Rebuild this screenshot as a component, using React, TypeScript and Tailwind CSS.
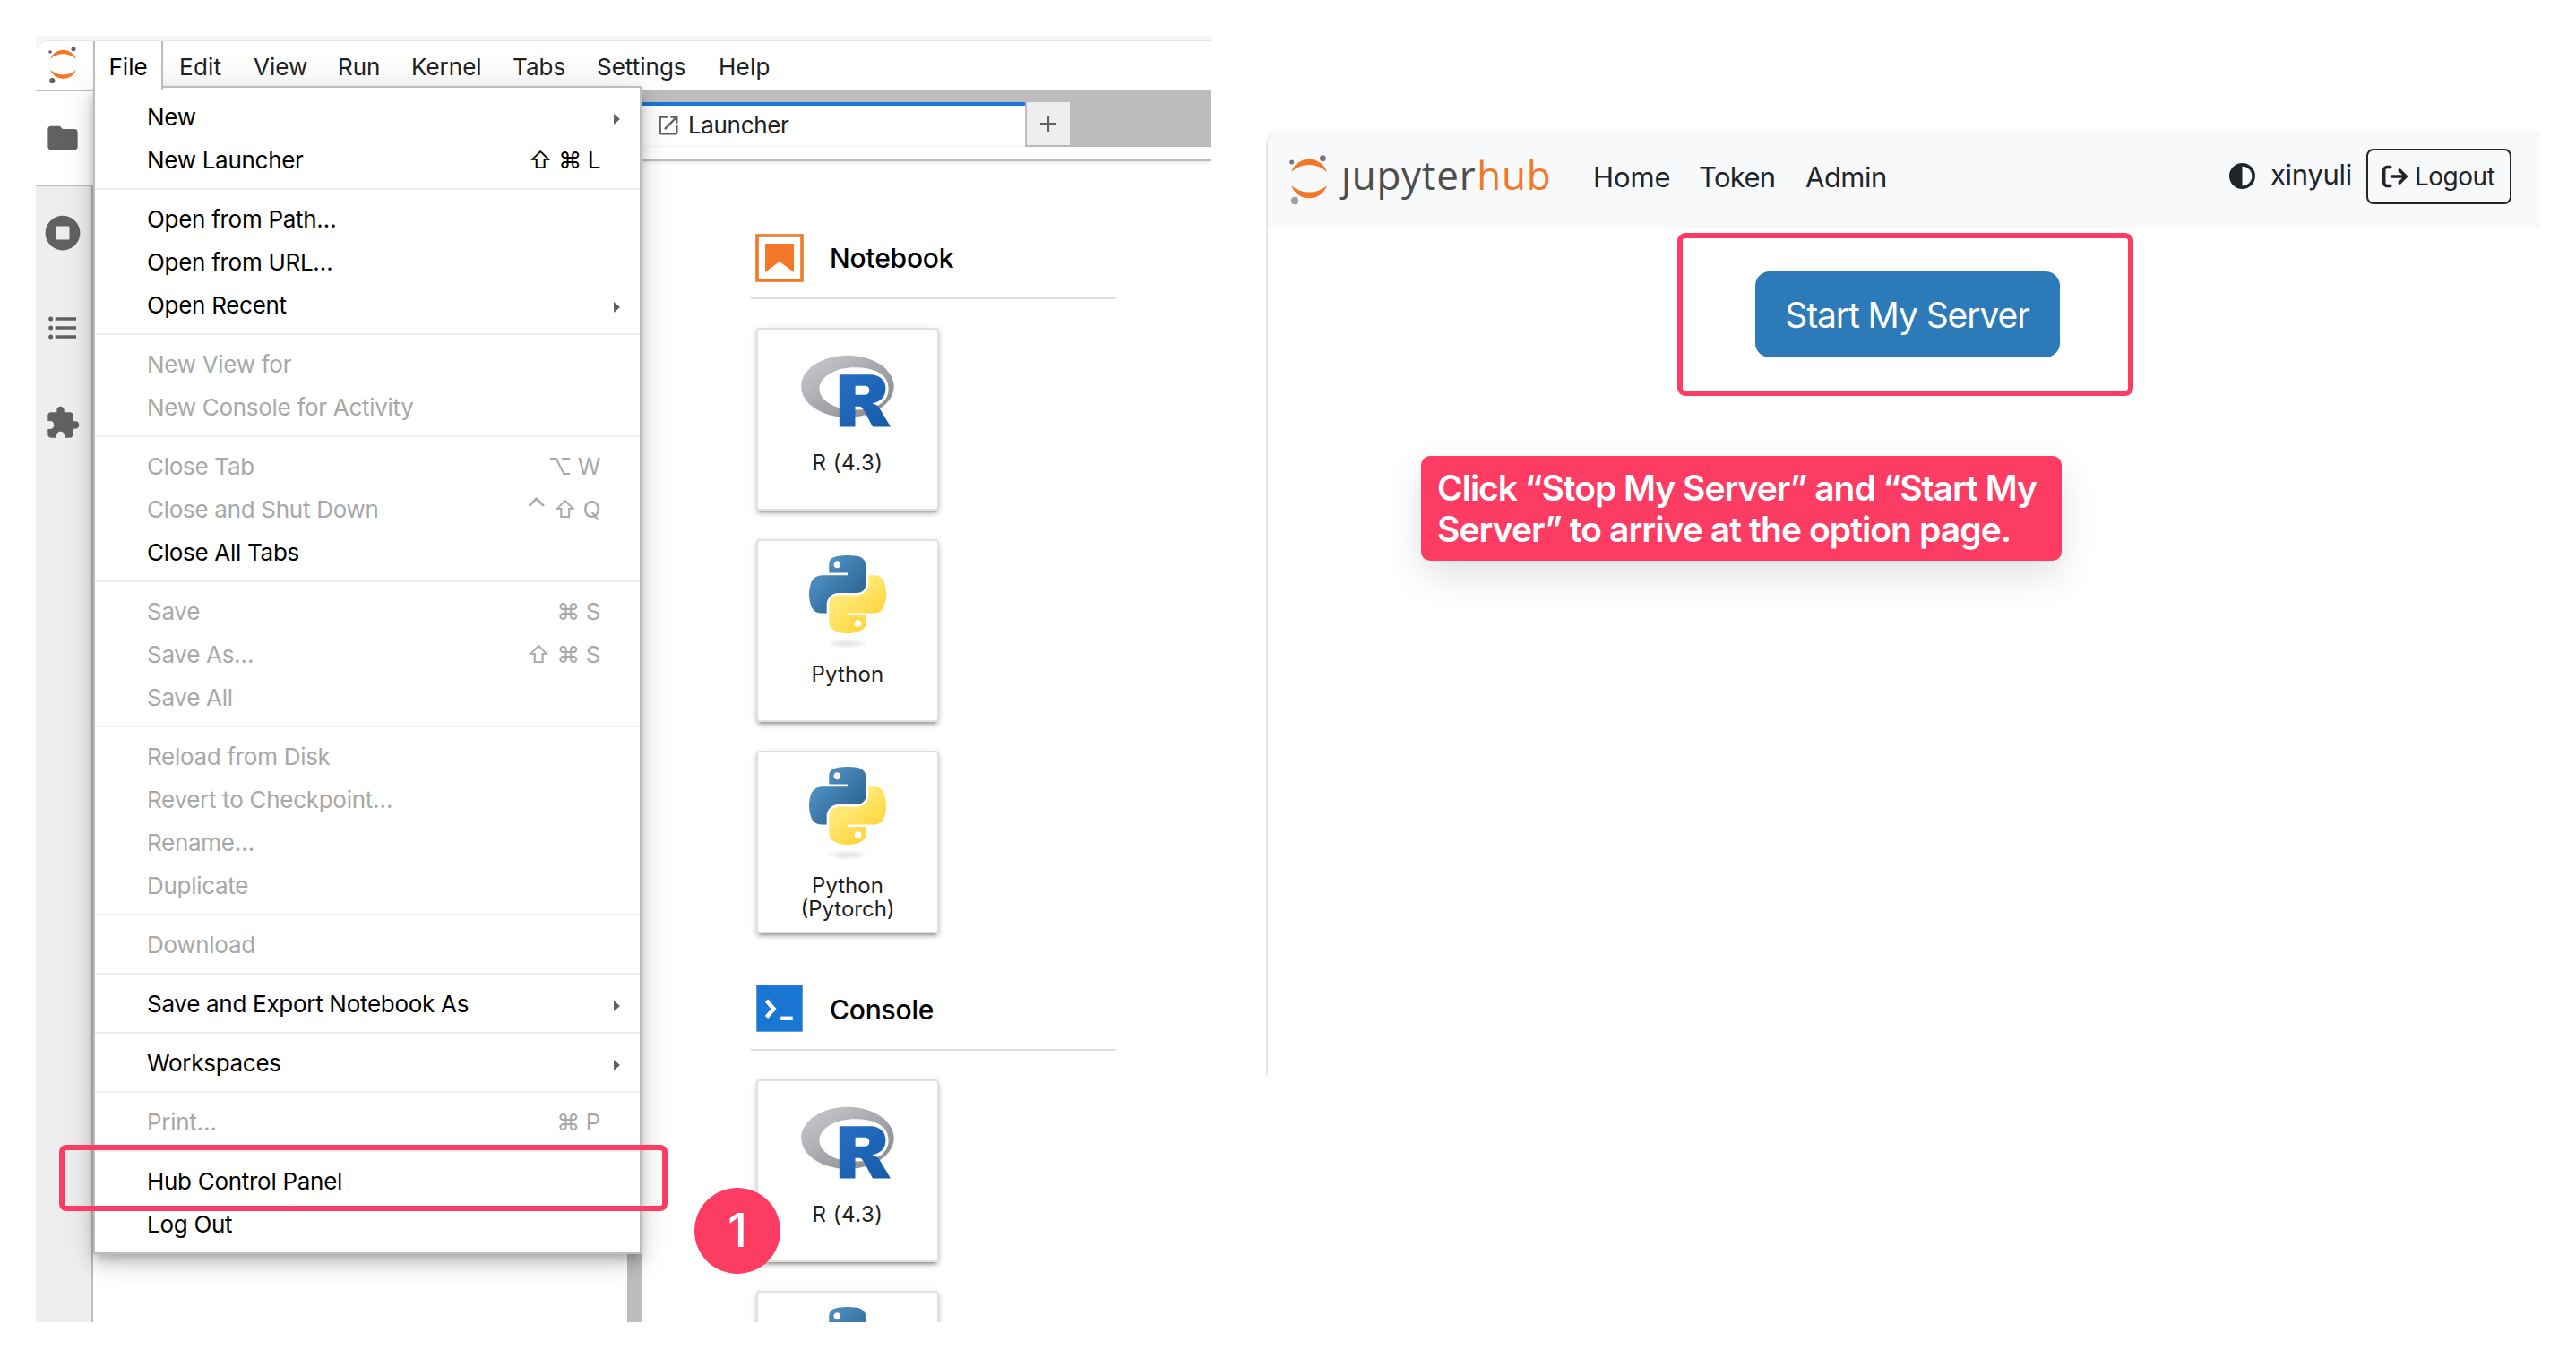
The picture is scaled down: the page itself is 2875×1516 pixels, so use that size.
import type { ReactNode } from "react";
import { FaArrowRightFromBracket, FaCircleHalfStroke } from "react-icons/fa6";

type MenuEntry = {
  label: string;
  keys?: string[];
  submenu?: boolean;
  enabled?: boolean;
};

const fileMenu: MenuEntry[][] = [
  [
    { label: "New", submenu: true, enabled: true },
    { label: "New Launcher", keys: ["⇧", "⌘", "L"], enabled: true },
  ],
  [
    { label: "Open from Path…", enabled: true },
    { label: "Open from URL…", enabled: true },
    { label: "Open Recent", submenu: true, enabled: true },
  ],
  [{ label: "New View for" }, { label: "New Console for Activity" }],
  [
    { label: "Close Tab", keys: ["⌥", "W"] },
    { label: "Close and Shut Down", keys: ["⌃", "⇧", "Q"] },
    { label: "Close All Tabs", enabled: true },
  ],
  [
    { label: "Save", keys: ["⌘", "S"] },
    { label: "Save As…", keys: ["⇧", "⌘", "S"] },
    { label: "Save All" },
  ],
  [
    { label: "Reload from Disk" },
    { label: "Revert to Checkpoint…" },
    { label: "Rename…" },
    { label: "Duplicate" },
  ],
  [{ label: "Download" }],
  [{ label: "Save and Export Notebook As", submenu: true, enabled: true }],
  [{ label: "Workspaces", submenu: true, enabled: true }],
  [{ label: "Print…", keys: ["⌘", "P"] }],
  [
    { label: "Hub Control Panel", enabled: true },
    { label: "Log Out", enabled: true },
  ],
];

function LabLogo() {
  return (
    <svg className="h-[54px] w-16 shrink-0" viewBox="40 46 64 54">
      <g fill="#f37726">
        <path d="M56 66A15.35 15.35 0 0 1 85 66A21.3 21.3 0 0 0 56 66Z" />
        <path d="M56 77.7A15.35 15.35 0 0 0 85 77.7A21.3 21.3 0 0 1 56 77.7Z" />
      </g>
      <g fill="#616161">
        <circle cx="82" cy="54.7" r="2.5" />
        <circle cx="56" cy="58" r="1.8" />
        <circle cx="58.3" cy="90" r="3.1" />
      </g>
    </svg>
  );
}

function HubLogo() {
  return (
    <svg className="h-16 w-[46px] shrink-0" viewBox="1438 165 46 64">
      <g fill="#f37726">
        <path d="M1441.3 191.7A21.07 21.07 0 0 1 1481 191.7A29.4 29.4 0 0 0 1441.3 191.7Z" />
        <path d="M1441.3 207.3A21.07 21.07 0 0 0 1481 207.3A31 31 0 0 1 1441.3 207.3Z" />
      </g>
      <circle cx="1476.4" cy="176.7" r="3.4" fill="#767677" />
      <circle cx="1441.7" cy="181" r="2.5" fill="#767677" />
      <circle cx="1445" cy="224" r="4.2" fill="#9e9e9e" />
    </svg>
  );
}

function RLogo() {
  return (
    <svg className="h-[81px] w-[104px]" viewBox="0 0 724 561">
      <defs>
        <linearGradient id="rRing" x1="0" y1="0" x2="1" y2="1">
          <stop offset="0" stopColor="#cbced0" />
          <stop offset="1" stopColor="#84838b" />
        </linearGradient>
        <linearGradient id="rBody" x1="0" y1="0" x2="1" y2="1">
          <stop offset="0" stopColor="#276dc3" />
          <stop offset="1" stopColor="#165caa" />
        </linearGradient>
      </defs>
      <path
        fill="url(#rRing)"
        fillRule="evenodd"
        d="M361.453 485.937C162.329 485.937.906 377.828.906 244.469.906 111.109 162.329 3 361.453 3 560.578 3 722 111.109 722 244.469c0 133.359-161.422 241.468-360.547 241.468ZM416.641 97.406c-151.352 0-274.047 73.908-274.047 165.078s122.695 165.078 274.047 165.078 263.046-50.529 263.046-165.078c0-114.513-111.694-165.078-263.046-165.078Z"
      />
      <path
        fill="url(#rBody)"
        fillRule="evenodd"
        d="M550 377s21.822 6.585 34.5 13c4.399 2.226 12.01 6.668 17.5 12.5 5.378 5.712 8 11.5 8 11.5l86 145-139 .062L492 437s-13.31-22.869-21.5-29.5c-6.832-5.531-9.745-7.5-16.5-7.5h-33.026L421 558.974l-123 .052V152.938h247s112.5 2.029 112.5 109.062S550 377 550 377Zm-53.5-135.976-74.463-.048-.037 69.05 74.5-.024s34.5-.107 34.5-35.125c0-35.722-34.5-33.853-34.5-33.853Z"
      />
    </svg>
  );
}

function PythonLogo() {
  return (
    <svg className="h-[104px] w-[104px]" viewBox="0 0 104 104">
      <defs>
        <linearGradient id="pyBlue" x1="0" y1="0" x2="0.75" y2="0.75">
          <stop offset="0" stopColor="#5a9fd4" />
          <stop offset="1" stopColor="#306998" />
        </linearGradient>
        <linearGradient id="pyYellow" x1="0.75" y1="0.85" x2="0.35" y2="0.35">
          <stop offset="0" stopColor="#ffd43b" />
          <stop offset="1" stopColor="#ffe873" />
        </linearGradient>
        <radialGradient id="pyShadow">
          <stop offset="0" stopColor="#b8b8b8" stopOpacity="0.35" />
          <stop offset="1" stopColor="#7f7f7f" stopOpacity="0" />
        </radialGradient>
      </defs>
      <g transform="translate(9 0) scale(0.775)">
        <path
          fill="url(#pyBlue)"
          d="M54.919 0C50.335.022 45.958.413 42.106 1.095 30.76 3.099 28.7 7.295 28.7 15.032v10.219h26.813v3.406H18.638c-7.793 0-14.616 4.684-16.75 13.594-2.462 10.213-2.571 16.586 0 27.25 1.906 7.938 6.457 13.594 14.25 13.594h9.218v-12.25c0-8.85 7.657-16.657 16.75-16.657h26.782c7.454 0 13.406-6.138 13.406-13.625V15.032c0-7.266-6.13-12.725-13.407-13.937C64.282.328 59.502-.02 54.92 0Zm-14.5 8.22c2.769 0 5.03 2.298 5.03 5.124 0 2.817-2.261 5.094-5.03 5.094-2.78 0-5.032-2.277-5.032-5.094 0-2.826 2.252-5.125 5.032-5.125Z"
        />
        <path
          fill="url(#pyYellow)"
          d="M85.638 28.657v11.906c0 9.231-7.826 17-16.75 17H42.106c-7.336 0-13.406 6.279-13.406 13.625V96.72c0 7.266 6.318 11.54 13.406 13.625 8.488 2.496 16.626 2.947 26.782 0 6.75-1.954 13.406-5.888 13.406-13.625V86.5H55.513v-3.406h40.187c7.792 0 10.696-5.435 13.406-13.594 2.8-8.399 2.68-16.476 0-27.25-1.926-7.757-5.604-13.594-13.406-13.594H85.638Zm-15.063 64.656c2.78 0 5.031 2.278 5.031 5.094 0 2.826-2.251 5.125-5.03 5.125-2.77 0-5.032-2.299-5.032-5.125 0-2.816 2.262-5.094 5.031-5.094Z"
        />
      </g>
      <ellipse cx="52" cy="98.5" rx="23" ry="5.5" fill="url(#pyShadow)" />
    </svg>
  );
}

function NotebookIcon() {
  return (
    <svg className="h-[54px] w-[54px]" viewBox="0 0 54 54">
      <rect x="2" y="2" width="50" height="50" fill="none" stroke="#f37726" strokeWidth="3.6" />
      <path fill="#f37726" d="M11 11H43V43L27 31L11 43Z" />
    </svg>
  );
}

function ConsoleIcon() {
  return (
    <svg className="h-[54px] w-[54px]" viewBox="0 0 54 54">
      <rect x="1.3" width="51.4" height="51.7" fill="#1976d2" />
      <path d="M12.5 17L20.5 26.2L12.5 35.5" fill="none" stroke="#fff" strokeWidth="4.6" />
      <rect x="28.3" y="34.6" width="13.4" height="4.4" fill="#fff" />
    </svg>
  );
}

function SideIcon({ path, box = "0 0 24 24" }: { path: string; box?: string }) {
  return (
    <div className="flex h-[106px] items-center pb-[2px] pl-[10px]">
      <svg className="h-10 w-10" viewBox={box} fill="#616161">
        <path d={path} />
      </svg>
    </div>
  );
}

function MenuRow({ label, keys, submenu, enabled }: MenuEntry) {
  return (
    <li
      className={
        "flex h-12 items-center pl-[58px] pr-[22px] " + (enabled ? "text-black" : "text-[#a8a8a8]")
      }
    >
      <span className="flex-1 whitespace-nowrap pt-[2px] tracking-[-0.29px]">{label}</span>
      {keys && (
        <span className="mr-[22px] whitespace-nowrap pt-[2px] tracking-[-0.4px]">
          {keys.map((key, i) => (
            <span key={key}>
              {i > 0 && " "}
              <span className={key === "⌃" ? "text-[31px] leading-none" : ""}>{key}</span>
            </span>
          ))}
        </span>
      )}
      {submenu && (
        <svg className="mt-[5px] h-3 w-[7px]" viewBox="0 0 7 12">
          <path d="M0 0L7 6L0 12Z" fill="#616161" />
        </svg>
      )}
    </li>
  );
}

function FileMenu() {
  return (
    <>
      <ul className="absolute left-16 top-14 z-10 h-[1304px] w-[612px] border-2 border-[#bdbdbd] bg-white py-2 text-[26px] leading-[46px] shadow-[0_6px_10px_-2px_rgba(0,0,0,0.2),0_12px_20px_rgba(0,0,0,0.14),0_2px_36px_rgba(0,0,0,0.12)]">
        {fileMenu.map((group, i) => (
          <li key={i}>
            {i > 0 && <div className="my-2 h-0.5 bg-[#eeeeee]" />}
            <ul>
              {group.map((entry) => (
                <MenuRow key={entry.label} {...entry} />
              ))}
            </ul>
          </li>
        ))}
      </ul>
      <div className="absolute left-16 top-1.5 z-20 h-[54px] w-[78px] border-x-2 border-[#bdbdbd] bg-white pl-[15.5px] pt-[3px] text-[26px] leading-[51px] text-black">
        File
      </div>
    </>
  );
}

function MenuBar() {
  return (
    <div className="flex h-[56px] border-b-2 border-[#bdbdbd] bg-white text-[26px] text-[#212121]">
      <LabLogo />
      <div className="flex pl-[78px] pt-[3px] leading-[51px]">
        <span className="w-[84px] pl-[18px] tracking-[0.25px]">Edit</span>
        <span className="w-[92px] pl-[17px]">View</span>
        <span className="w-[83px] pl-[19px]">Run</span>
        <span className="w-[114px] pl-[18px]">Kernel</span>
        <span className="w-[93px] pl-[17px]">Tabs</span>
        <span className="w-[135px] pl-[18px]">Settings</span>
        <span className="pl-[19px] tracking-[0.25px]">Help</span>
      </div>
    </div>
  );
}

function SideBar() {
  return (
    <div className="flex w-16 shrink-0 flex-col">
      <div className="h-[106px] border-b-2 border-[#bdbdbd] bg-white">
        <SideIcon path="M10 4H4c-1.1 0-1.99.9-1.99 2L2 18c0 1.1.9 2 2 2h16c1.1 0 2-.9 2-2V8c0-1.1-.9-2-2-2h-8l-2-2z" />
      </div>
      <div className="flex-1 border-r-2 border-[#bdbdbd] bg-[#eeeeee]">
        <SideIcon
          box="0 0 512 512"
          path="M256 8C119 8 8 119 8 256s111 248 248 248 248-111 248-248S393 8 256 8zm96 328c0 8.8-7.2 16-16 16H176c-8.8 0-16-7.2-16-16V176c0-8.8 7.2-16 16-16h160c8.8 0 16 7.2 16 16v160z"
        />
        <SideIcon path="M7 5h14v2H7V5m0 8v-2h14v2H7M4 4.5A1.5 1.5 0 0 1 5.5 6 1.5 1.5 0 0 1 4 7.5 1.5 1.5 0 0 1 2.5 6 1.5 1.5 0 0 1 4 4.5m0 6A1.5 1.5 0 0 1 5.5 12 1.5 1.5 0 0 1 4 13.5 1.5 1.5 0 0 1 2.5 12 1.5 1.5 0 0 1 4 10.5M7 19v-2h14v2H7m-3-2.5A1.5 1.5 0 0 1 5.5 18 1.5 1.5 0 0 1 4 19.5 1.5 1.5 0 0 1 2.5 18 1.5 1.5 0 0 1 4 16.5" />
        <SideIcon path="M20.5 11H19V7c0-1.1-.9-2-2-2h-4V3.5C13 2.12 11.88 1 10.5 1S8 2.12 8 3.5V5H4c-1.1 0-1.99.9-1.99 2v3.8H3.5c1.49 0 2.7 1.21 2.7 2.7s-1.21 2.7-2.7 2.7H2V20c0 1.1.9 2 2 2h3.8v-1.5c0-1.49 1.21-2.7 2.7-2.7 1.49 0 2.7 1.21 2.7 2.7V22H17c1.1 0 2-.9 2-2v-4h1.5c1.38 0 2.5-1.12 2.5-2.5S21.88 11 20.5 11z" />
      </div>
    </div>
  );
}

function KernelCard({ logo, children }: { logo: ReactNode; children: ReactNode }) {
  return (
    <div className="ml-1.5 flex h-[204px] w-[204px] shrink-0 flex-col items-center rounded-[4px] border-2 border-[#e0e0e0] bg-white pt-4 shadow-[0_6px_2px_-4px_rgba(0,0,0,0.2),0_4px_4px_rgba(0,0,0,0.14),0_2px_10px_rgba(0,0,0,0.12)]">
      <div className="flex h-[104px] shrink-0 items-center">{logo}</div>
      <div className="mt-4 text-center text-2xl leading-[26px] text-[#212121]">{children}</div>
    </div>
  );
}

function Section({
  icon,
  title,
  children,
}: {
  icon: ReactNode;
  title: string;
  children: ReactNode;
}) {
  return (
    <section>
      <div className="flex w-[408px] items-center border-b-2 border-[#e0e0e0] pb-[17px] pl-[5px]">
        {icon}
        <h2 className="ml-[29px] text-[30px] font-medium leading-[54px] tracking-[-0.2px] text-black">
          {title}
        </h2>
      </div>
      <div className="mt-8 flex flex-col gap-8">{children}</div>
    </section>
  );
}

function Launcher() {
  return (
    <div className="flex flex-1 flex-col">
      <div className="-mt-[2px] flex h-16 bg-[#bdbdbd] pt-[14px]">
        <div className="flex h-[50px] w-[428px] items-center border-t-4 border-[#1976d2] bg-white pl-4">
          <svg className="mb-[2px] h-7 w-7" viewBox="0 0 24 24" fill="#616161">
            <path d="M19 19H5V5h7V3H5a2 2 0 0 0-2 2v14a2 2 0 0 0 2 2h14c1.1 0 2-.9 2-2v-7h-2v7zM14 3v2h3.59l-9.83 9.83 1.41 1.41L19 6.41V10h2V3h-7z" />
          </svg>
          <span className="mb-[2px] ml-[8px] text-[26px] leading-[42px] tracking-[-0.35px] text-[#212121]">
            Launcher
          </span>
        </div>
        <div className="ml-0.5 flex h-12 w-12 items-center justify-center bg-[#eeeeee]">
          <svg className="h-[18px] w-[18px]" viewBox="0 0 18 18">
            <path d="M9 0V18M0 9H18" stroke="#616161" strokeWidth="2.2" />
          </svg>
        </div>
      </div>
      <div className="z-[1] h-4 shrink-0 border-b-2 border-[#bdbdbd] bg-white shadow-[0_1px_4px_rgba(0,0,0,0.12)]" />
      <div className="flex flex-col gap-[58px] pl-[122px] pt-[81px]">
        <Section icon={<NotebookIcon />} title="Notebook">
          <KernelCard logo={<RLogo />}>
            <span className="tracking-[0.5px]">R (4.3)</span>
          </KernelCard>
          <KernelCard logo={<PythonLogo />}>
            <span className="tracking-[0.2px]">Python</span>
          </KernelCard>
          <KernelCard logo={<PythonLogo />}>
            Python
            <br />
            (Pytorch)
          </KernelCard>
        </Section>
        <Section icon={<ConsoleIcon />} title="Console">
          <KernelCard logo={<RLogo />}>
            <span className="tracking-[0.5px]">R (4.3)</span>
          </KernelCard>
          <KernelCard logo={<PythonLogo />}>{null}</KernelCard>
        </Section>
      </div>
    </div>
  );
}

function LabWindow() {
  return (
    <div className="relative ml-10 mt-10 h-[1436px] w-[1312px] shrink-0">
      <div className="flex h-full w-full flex-col overflow-hidden bg-[#f6f6f6] pt-[5px]">
        <div className="h-[1431px] rounded-tl-[14px] border-t border-[#e8e8e8] bg-white">
          <div className="isolate h-full overflow-hidden rounded-tl-[14px]">
            <MenuBar />
            <div className="flex h-[1374px]">
              <SideBar />
              <div className="w-[596px] shrink-0" />
              <div className="w-4 shrink-0 bg-[#bdbdbd]" />
              <Launcher />
            </div>
          </div>
        </div>
      </div>
      <FileMenu />
      <div className="absolute left-[26px] top-[1238px] z-20 h-[74px] w-[679px] rounded-lg border-[6px] border-[#fc3c63]" />
      <div className="absolute left-[735px] top-[1286px] z-20 flex h-24 w-24 items-center justify-center rounded-full bg-[#fc3c63] text-[52px] font-medium text-white">
        1
      </div>
    </div>
  );
}

function HubWindow() {
  return (
    <div className="ml-[61px] mt-[146px] h-[1054px] w-[1422px] shrink-0 rounded-tl-[16px] border-l-2 border-[#e6e6e6]">
      <nav className="flex h-[109px] items-center rounded-tl-[14px] bg-[#f8f9fb] pb-[7px] pl-[23px] text-[31px] text-[#212529]">
        <HubLogo />
        <span className="ml-[13px] w-[281px] pb-[5px] font-['Open_Sans'] text-[44px] font-medium leading-[60px] tracking-[0.7px] text-[#4e4e4e]">
          ȷupyter<span className="ml-px text-[#f37726]">hub</span>
        </span>
        <span className="w-[118px] pt-[3px] tracking-[-0.1px]">Home</span>
        <span className="w-[119px] pt-[3px] tracking-[-0.7px]">Token</span>
        <span className="flex-1 pt-[3px] tracking-[-0.5px]">Admin</span>
        <FaCircleHalfStroke className="mb-[2px] mr-[17px] size-[29px]" />
        <span className="w-[107px] pb-[4px] tracking-[-0.3px]">xinyuli</span>
        <button className="mr-8 flex h-[62px] w-[162px] items-center rounded-lg border-2 border-[#212529] pl-4 text-[28px] tracking-[-0.5px]">
          <FaArrowRightFromBracket className="mr-[8px] size-[28px]" />
          Logout
        </button>
      </nav>
      <main>
        <div className="ml-[457px] mt-[5px] flex h-[182px] w-[509px] items-center justify-center rounded-[9px] border-[6px] border-[#fc3c63] pl-[4px]">
          <button className="h-24 w-[340px] rounded-2xl bg-[#2c7ab7] pt-[2px] text-[39px] leading-[94px] tracking-[-1.08px] text-white">
            Start My Server
          </button>
        </div>
        <p className="ml-[171px] mt-[67px] h-[117px] w-[715px] whitespace-nowrap rounded-[10px] bg-[#fc3c63] pl-[18px] pt-[13px] text-[39px] font-semibold leading-[46px] tracking-[-1.02px] text-white shadow-[0_16px_40px_rgba(0,0,0,0.12)]">
          Click “Stop My Server” and “Start My
          <br />
          <span className="tracking-[-0.93px]">Server” to arrive at the option page.</span>
        </p>
      </main>
    </div>
  );
}

export default function App() {
  return (
    <div className="flex h-[1516px] w-[2875px] items-start overflow-hidden bg-white font-['Inter',sans-serif]">
      <LabWindow />
      <HubWindow />
    </div>
  );
}
